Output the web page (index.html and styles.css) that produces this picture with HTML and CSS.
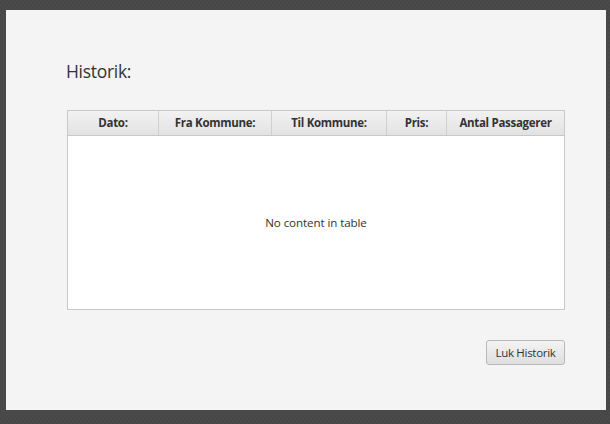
FILE: index.html
```html
<!DOCTYPE html>
<html>
<head>
<meta charset="utf-8">
<link rel="stylesheet" href="styles.css">
</head>
<body>
<div class="panel">
  <div class="title">Historik:</div>
  <div class="table">
    <div class="thead">
      <div class="th c1">Dato:</div>
      <div class="th c2">Fra Kommune:</div>
      <div class="th c3">Til Kommune:</div>
      <div class="th c4">Pris:</div>
      <div class="th c5">Antal Passagerer</div>
    </div>
    <div class="tbody">No content in table</div>
  </div>
  <div class="actions">
    <button class="btn">Luk Historik</button>
  </div>
</div>
</body>
</html>
```
FILE: styles.css
```css
html, body {
  margin: 0;
  padding: 0;
  width: 610px;
  height: 424px;
  overflow: hidden;
}
body {
  background-color: #4a4a4a;
  background-image:
    linear-gradient(45deg, #474747 25%, transparent 25%, transparent 75%, #474747 75%),
    linear-gradient(45deg, #474747 25%, transparent 25%, transparent 75%, #474747 75%);
  background-size: 4px 4px;
  background-position: 0 0, 2px 2px;
  font-family: "Open Sans", "Noto Sans", sans-serif;
  color: #333;
}
.panel {
  margin: 10px 0 0 6px;
  width: 600px;
  height: 400px;
  background: #f4f4f4;
  box-sizing: border-box;
  padding: 0 41px 0 61px;
  display: flex;
  flex-direction: column;
}
.title {
  margin-top: 48px;
  height: 26px;
  line-height: 26px;
  font-size: 17.5px;
  letter-spacing: -0.3px;
  color: #333;
  margin-left: -1px;
}
.table {
  margin-top: 26px;
  width: 498px;
  height: 200px;
  box-sizing: border-box;
  border: 1px solid #c8c8c8;
  background: #fff;
  display: flex;
  flex-direction: column;
}
.thead {
  display: flex;
  height: 24px;
  border-bottom: 1px solid #c8c8c8;
  background: linear-gradient(#f2f2f2, #e2e2e2);
}
.th {
  box-sizing: border-box;
  border-right: 1px solid #cfcfcf;
  font-size: 11.5px;
  letter-spacing: -0.3px;
  font-weight: bold;
  line-height: 24px;
  text-align: center;
  color: #333;
  white-space: nowrap;
}
.c1 { width: 91px; }
.c2 { width: 113px; }
.c3 { width: 115px; }
.c4 { width: 60px; }
.c5 { width: 117px; border-right: none; }
.tbody {
  flex: 1;
  display: flex;
  align-items: center;
  justify-content: center;
  font-size: 11.6px;
  letter-spacing: -0.1px;
  color: #333;
}
.actions {
  margin-top: 30px;
  display: flex;
  justify-content: flex-end;
  width: 498px;
}
.btn {
  width: 79px;
  height: 25px;
  margin-right: 0;
  padding: 0;
  box-sizing: border-box;
  border: 1px solid #b8b8b8;
  border-radius: 3px;
  background: linear-gradient(#f4f4f4, #dedede);
  font-family: "Open Sans", "Noto Sans", sans-serif;
  font-size: 11.5px;
  letter-spacing: -0.3px;
  color: #333;
}
```
